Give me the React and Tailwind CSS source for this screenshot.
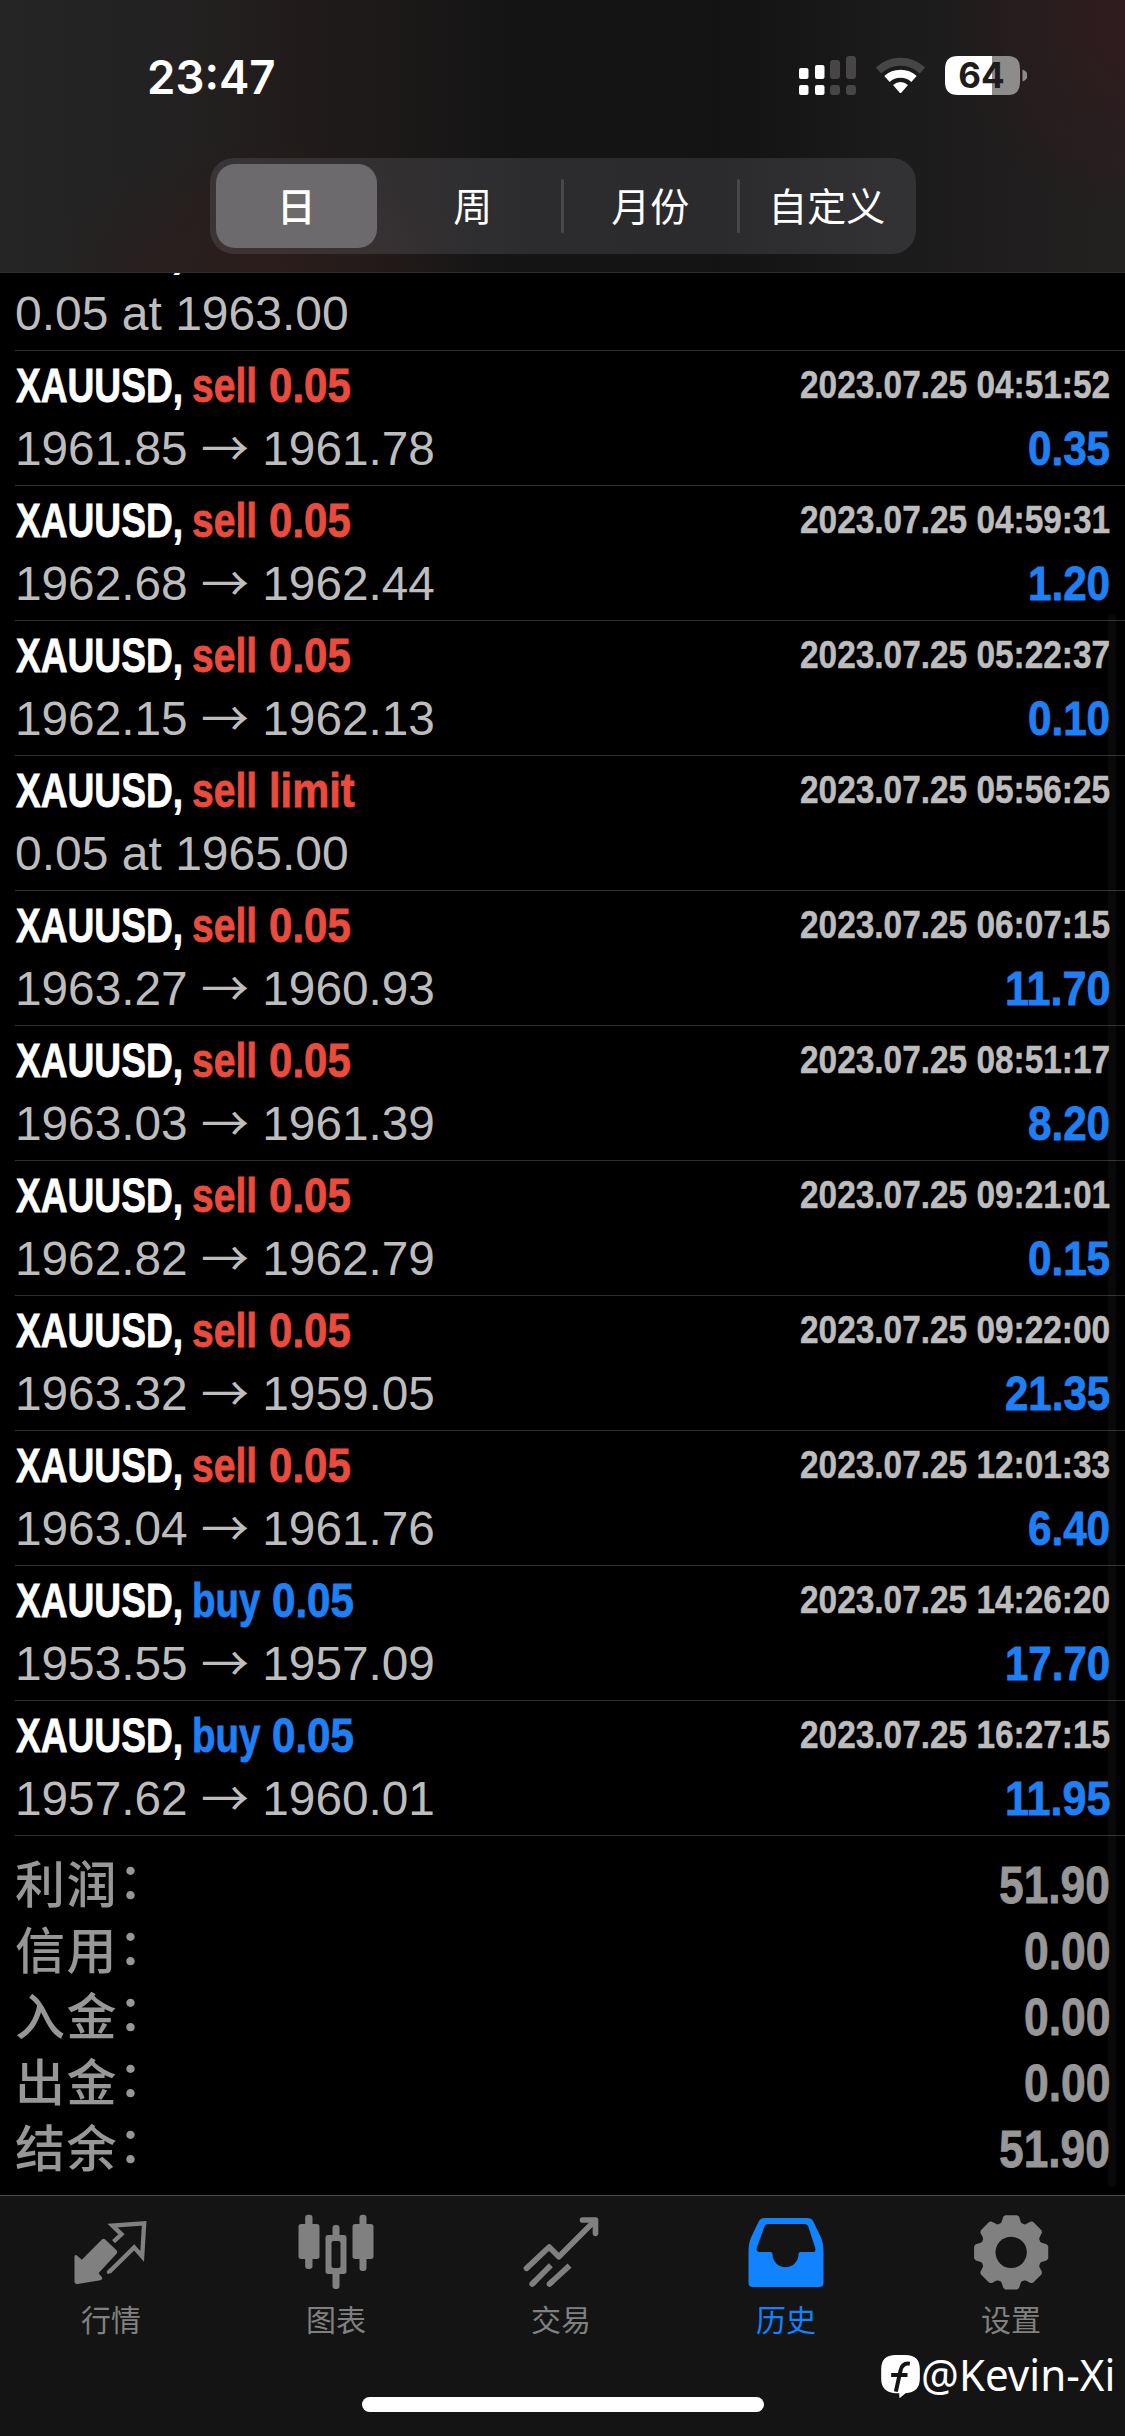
import { useLayoutEffect, useRef } from "react";

// Text squeezed or stretched horizontally to a given advance width.
function Fit({ w, className = "", children }) {
  const ref = useRef(null);
  useLayoutEffect(() => {
    const el = ref.current;
    el.style.transform = `scaleX(${w / el.offsetWidth})`;
  });
  return (
    <span className={`inline-block whitespace-nowrap ${className}`} style={{ width: w }}>
      <span ref={ref} className="inline-block origin-left whitespace-pre">{children}</span>
    </span>
  );
}

const numWidth = (s, d, p) => [...s].reduce((a, c) => a + (c === "." || c === ":" ? p : d), 0);

const deals = [
  [null, null, null, "0.05 at 1963.00"],
  ["sell", "0.05", "2023.07.25 04:51:52", "1961.85", "1961.78", "0.35"],
  ["sell", "0.05", "2023.07.25 04:59:31", "1962.68", "1962.44", "1.20"],
  ["sell", "0.05", "2023.07.25 05:22:37", "1962.15", "1962.13", "0.10"],
  ["sell", "limit", "2023.07.25 05:56:25", "0.05 at 1965.00"],
  ["sell", "0.05", "2023.07.25 06:07:15", "1963.27", "1960.93", "11.70"],
  ["sell", "0.05", "2023.07.25 08:51:17", "1963.03", "1961.39", "8.20"],
  ["sell", "0.05", "2023.07.25 09:21:01", "1962.82", "1962.79", "0.15"],
  ["sell", "0.05", "2023.07.25 09:22:00", "1963.32", "1959.05", "21.35"],
  ["sell", "0.05", "2023.07.25 12:01:33", "1963.04", "1961.76", "6.40"],
  ["buy", "0.05", "2023.07.25 14:26:20", "1953.55", "1957.09", "17.70"],
  ["buy", "0.05", "2023.07.25 16:27:15", "1957.62", "1960.01", "11.95"],
];

function Deal({ deal }) {
  const [side, volume, time, open, close, profit] = deal;
  return (
    <div className="ml-[15px] box-border h-[135px] shrink-0 border-b border-[#2f2f2f] pr-[15px] pt-[3px] text-[48px] leading-[63px]">
      <div className="flex h-[63px] justify-between font-bold [-webkit-text-stroke:0.8px_currentColor]">
        <div className="flex pl-[1px]">
          {side ? (
            <>
              <Fit w={167} className="text-white">XAUUSD,</Fit>
              <span className={side === "buy" ? "flex pl-[9px] text-[#1f80f5]" : "flex pl-[9px] text-[#ea4b3c]"}>
                <Fit w={side === "buy" ? 68 : 65}>{side}</Fit>
                <span className="w-[12px]" />
                <Fit w={volume === "limit" ? 86 : 81.5}>{volume}</Fit>
              </span>
            </>
          ) : (
            <span className="pl-[155px] text-white">,</span>
          )}
        </div>
        {time && (
          <Fit w={310} className="text-[39px] leading-[62px] text-[#bdbdbd] [-webkit-text-stroke:0.5px_currentColor]">{time}</Fit>
        )}
      </div>
      <div className="flex h-[63px] justify-between text-[#bdbdbd]">
        {close ? (
          <div className="flex whitespace-pre">
            <Fit w={186}>{open} </Fit>
            <span className="relative -top-[3px] w-[48px] font-['Noto_Sans_CJK_SC'] font-normal">→</span>
            <Fit w={186}> {close}</Fit>
          </div>
        ) : (
          <div>{open}</div>
        )}
        {profit && (
          <Fit w={numWidth(profit, 23.3, 11.8)} className="font-bold text-[#1f80f5] [-webkit-text-stroke:0.8px_currentColor]">{profit}</Fit>
        )}
      </div>
    </div>
  );
}

const totals = [
  ["利润", "51.90"],
  ["信用", "0.00"],
  ["入金", "0.00"],
  ["出金", "0.00"],
  ["结余", "51.90"],
];

const gearPath = (() => {
  const pts = [];
  for (let i = 0; i < 8; i++) {
    for (const [a, r] of [[-19, 90], [-16, 94], [-11.5, 107], [-9, 109.5], [9, 109.5], [11.5, 107], [16, 94], [19, 90]]) {
      const t = ((i * 45 + a - 90) * Math.PI) / 180;
      pts.push(`${(575 + r * Math.cos(t)).toFixed(1)} ${(217 + r * Math.sin(t)).toFixed(1)}`);
    }
  }
  return `M${pts.join("L")}Z`;
})();

const tabs = [
  ["行情", "67.5 48 300 300", (
    <>
      <path fill="currentColor" d="M188 178Q193 174 198 179L231 211Q236 216 231 221L177 280L187 291Q191 297 183 301L114 312Q105 313 105 304V229Q107 221 114 228L127 239Z" />
      <path fill="none" stroke="currentColor" strokeWidth="13" d="M222 185L246 163L219 137L314 130L308 229L284 202L209 276" />
      <path stroke="currentColor" strokeWidth="11" strokeLinecap="round" d="M207 276L216 268" />
    </>
  )],
  ["图表", "742.5 48 300 300", (
    <g fill="currentColor">
      <rect x="777" y="132" width="63" height="105" rx="8" />
      <rect x="797" y="104" width="22" height="163" rx="9" />
      <rect x="939" y="132" width="63" height="105" rx="8" />
      <rect x="960" y="104" width="21" height="169" rx="9" />
      <path fillRule="evenodd" d="M866 165H913Q921 165 921 173V274Q921 282 913 282H866Q858 282 858 274V173Q858 165 866 165ZM882 183Q876 183 876 189V258Q876 264 882 264H897Q903 264 903 258V189Q903 183 897 183Z" />
      <path d="M879 168V144Q879 135 888 135H891Q900 135 900 144V168ZM879 279V318Q879 327 888 327H891Q900 327 900 318V279Z" />
    </g>
  )],
  ["交易", "97.5 48 300 300", (
    <g fill="none" stroke="currentColor" strokeWidth="17">
      <path strokeLinecap="round" strokeLinejoin="round" d="M141 265L209 201L238 230L346 122" />
      <path strokeLinecap="round" strokeLinejoin="round" d="M309 120H348V160" />
      <path d="M158 312L214 256M210 312L270 257" />
      <path strokeLinecap="round" d="M158 312L165 305M210 312L217 305.500" />
    </g>
  )],
  ["历史", "772.5 48 300 300", (
    <path fill="currentColor" fillRule="evenodd" d="M856 114H983Q996 114 1001 124L1024 172Q1032 190 1032 215V308Q1032 321 1019 321H820Q807 321 807 308V215Q807 190 815 172L838 124Q843 114 856 114ZM867 132Q858 132 855 139L832 203Q829 216 840 216H873Q879 216 879 223A39 39 0 0 0 957 223Q957 216 963 216H1000Q1010 216 1007 203L986 139Q983 132 974 132Z" />
  )],
  ["设置", "427.5 48 300 300", (
    <>
      <path fill="currentColor" stroke="currentColor" strokeWidth="6" strokeLinejoin="round" d={gearPath} />
      <circle cx="575" cy="217" r="47" fill="#141414" />
    </>
  )],
];

export default function App() {
  return (
    <div className="relative flex h-[2436px] w-[1125px] flex-col overflow-hidden bg-black font-['Liberation_Sans','Noto_Sans_CJK_SC',sans-serif]">
      <header className="flex h-[273px] shrink-0 flex-col border-b border-[#2e2e2e] bg-[#141414] bg-[radial-gradient(ellipse_220px_150px_at_260px_290px,#2e1c1bcc,transparent),radial-gradient(ellipse_200px_200px_at_1150px_20px,#35191dcc,transparent),linear-gradient(90deg,#252525_0px,#232222_150px,#211c1b_290px,#141414_530px,#131313_720px,#1c1b1b_900px,#232020_1125px)]">
        <div className="flex h-[158px] shrink-0 items-start justify-between pl-[147px] pr-[98px]">
          <div className="mt-[47px] font-['Inter'] text-[47px] font-semibold leading-[60px] text-white">
            <Fit w={129}>23:47</Fit>
          </div>
          <svg className="mt-[50px] h-[50px] w-[230px]" viewBox="797 50 230 50">
            <g fill="#fff">
              <rect x="799" y="68" width="9.500" height="11" rx="2" />
              <rect x="799" y="85" width="9.500" height="10" rx="2" />
              <rect x="815" y="65" width="9.500" height="14" rx="2" />
              <rect x="815" y="85" width="9.500" height="10" rx="2" />
            </g>
            <g fill="#474545">
              <rect x="830" y="60" width="10" height="19" rx="3" />
              <rect x="830" y="85" width="10" height="10" rx="3" />
              <rect x="846" y="56" width="10" height="23" rx="3" />
              <rect x="846" y="85" width="10" height="10" rx="3" />
            </g>
            <path fill="none" stroke="#474545" strokeWidth="8" d="M878.500 70.500A32 32 0 0 1 922.500 70.500" />
            <path fill="none" stroke="#fff" strokeWidth="8" d="M887 79A20 20 0 0 1 914 79" />
            <path fill="#fff" d="M893 85Q900.500 79 908 85L901.500 92.500Q900.500 93.500 899.500 92.500Z" />
            <path fill="#8e8b8b" d="M992 56H1008Q1020 56 1020 69V82Q1020 95 1008 95H992Z" />
            <path fill="#fff" d="M992 56H958Q945 56 945 69V82Q945 95 958 95H992Z" />
            <path fill="#8e8b8b" d="M1022.500 69.500Q1027.500 71 1027.500 75.500Q1027.500 80 1022.500 81.500Z" />
            <text x="981.500" y="88" textAnchor="middle" className="font-['Inter'] text-[35px] font-bold" fill="#1e1c1c">64</text>
          </svg>
        </div>
        <div className="mx-auto flex h-[96px] w-[706px] shrink-0 items-center rounded-[24px] bg-[#78788033] bg-[linear-gradient(#ffffff06,#ffffff06)] p-[6px] text-[39px] text-white font-['Noto_Sans_CJK_SC']">
          <div className="flex h-[84px] w-[162px] items-center justify-center rounded-[19px] bg-[#6d6a6d] pb-1 font-medium">日</div>
          <div className="flex h-[84px] w-[184px] items-center justify-center pb-1 pl-2">周</div>
          <div className="h-[54px] w-[3px] rounded bg-[#48484a]" />
          <div className="flex h-[84px] w-[174px] items-center justify-center pb-1">月份</div>
          <div className="h-[54px] w-[3px] rounded bg-[#48484a]" />
          <div className="flex h-[84px] w-[170px] items-center justify-center pb-1 pl-1">自定义</div>
        </div>
      </header>

      <main className="flex h-[1922px] shrink-0 flex-col overflow-hidden">
        <div className="-mt-[57px] flex flex-col">
          {deals.map((d, i) => <Deal key={i} deal={d} />)}
        </div>
        <div className="flex flex-col pl-[15px] pr-[15px] pt-[16px] text-[51.500px] font-bold leading-[66px] text-[#979797]">
          {totals.map(([label, value]) => (
            <div key={label} className="flex h-[66px] justify-between">
              <span className="relative -top-[4px] flex font-['Noto_Sans_CJK_SC'] text-[50px] font-medium tracking-[1.5px]">
                <span>{label}</span>
                <span className="relative -top-[4px]">：</span>
              </span>
              <Fit w={numWidth(value, 24.6, 12.6)} className="[-webkit-text-stroke:0.8px_currentColor]">{value}</Fit>
            </div>
          ))}
        </div>
      </main>

      <div className="absolute left-[1108px] top-[615px] h-[1572px] w-[8px] rounded-full bg-white/[0.035]" />

      <nav className="flex h-[241px] shrink-0 flex-col border-t border-[#4a4a4a] bg-[#141414]">
        <div className="-ml-[1px] flex h-[150px] shrink-0">
          {tabs.map(([label, viewBox, icon], i) => (
            <div key={label} className={i === 3 ? "flex w-[225px] flex-col items-center text-[#1283fe]" : "flex w-[225px] flex-col items-center text-[#808080]"}>
              <svg className="h-[100px] w-[100px]" viewBox={viewBox}>{icon}</svg>
              <span className="-ml-[1px] -mt-[3px] font-['Noto_Sans_CJK_SC'] text-[30px] leading-[50px]">{label}</span>
            </div>
          ))}
        </div>
        <div className="-mt-[1px] flex h-[60px] items-center justify-end pr-[11px] text-white">
          <svg className="mt-[4px] h-[44px] w-[39px]" viewBox="181 528 116 132">
            <path fill="#fff" d="M224 528H254Q297 528 297 571V598Q297 641 254 643L236 658L235 643H224Q181 641 181 598V571Q181 528 224 528Z" />
            <path fill="none" stroke="#141414" strokeWidth="12" d="M267 554Q244 551 239 575L225 638M211 588H260" />
          </svg>
          <Fit w={194} className="pl-[1px] font-['Noto_Sans'] text-[43px] font-normal leading-[60px]">@Kevin-Xi</Fit>
        </div>
      </nav>
      <div className="absolute left-[362px] top-[2397px] h-[15px] w-[402px] rounded-full bg-white" />
    </div>
  );
}
